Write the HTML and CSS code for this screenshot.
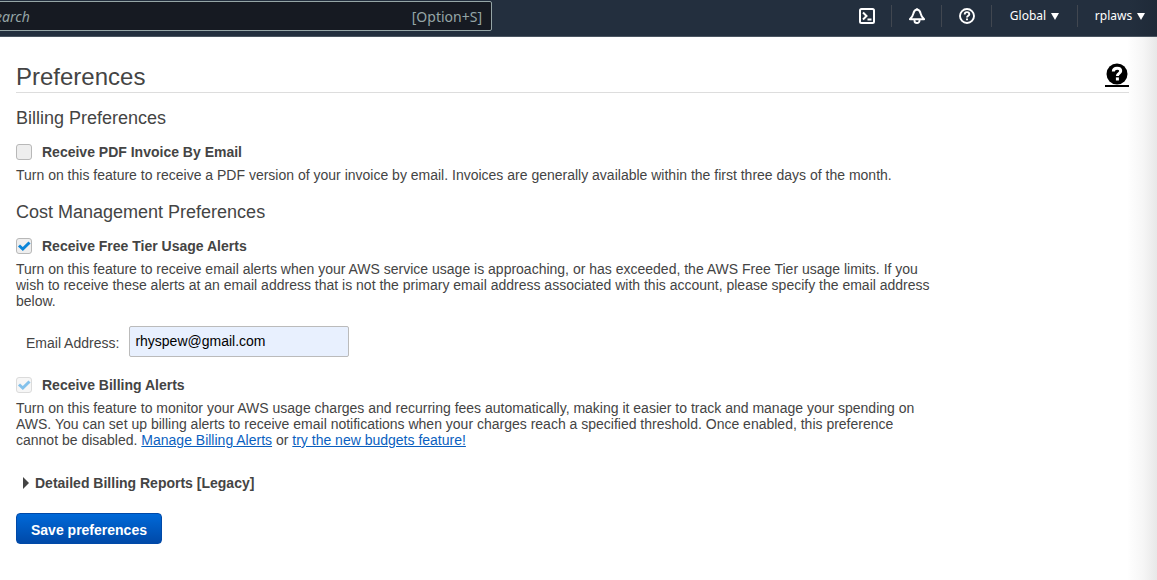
FILE: index.html
```html
<!DOCTYPE html>
<html lang="en">
<head>
<meta charset="utf-8">
<title>Preferences</title>
<link rel="stylesheet" href="styles.css">
</head>
<body>
<header class="topbar">
  <div class="search">
    <input class="search-input" type="search" placeholder="Search" aria-label="Search">
    <span class="search-hint">[Option+S]</span>
  </div>
  <nav class="tools">
    <button class="tool" type="button" aria-label="CloudShell">
      <svg width="16" height="16" viewBox="0 0 16 16" fill="none" stroke="#fff" stroke-width="2"><rect x="1" y="1" width="14" height="14" rx="1.5"/><path d="M4 4.5 7.5 8 4 11.500M8.500 11.500h4"/></svg>
    </button>
    <button class="tool" type="button" aria-label="Notifications">
      <svg width="16" height="16" viewBox="0 0 16 16" fill="none" stroke="#fff" stroke-width="1.900" stroke-linejoin="round"><path d="M8 1.500C6 1.900 4.800 3.300 4.300 5.800 3.800 8.300 2.500 9.800.8 11.200h14.400C13.500 9.800 12.200 8.300 11.700 5.800 11.200 3.300 10 1.900 8 1.500zM5.500 11.500v1.200a2.500 2.300 0 0 0 5 0v-1.200M8 .3v1.500"/></svg>
    </button>
    <button class="tool" type="button" aria-label="Support">
      <svg width="16" height="16" viewBox="0 0 16 16" fill="none" stroke="#fff" stroke-width="1.900"><circle cx="8" cy="8" r="7"/><path d="M5.700 6.400C5.700 4.900 6.700 4.100 8 4.100s2.300.8 2.300 2.100c0 1.500-2.300 1.600-2.300 3.300M8 10.600v1.700"/></svg>
    </button>
    <button class="tool menu region" type="button">Global <svg width="8" height="7" viewBox="0 0 8 7"><path d="M0 0h8L4 7z" fill="#fff"/></svg></button>
    <button class="tool menu account" type="button">rplaws <svg width="8" height="7" viewBox="0 0 8 7"><path d="M0 0h8L4 7z" fill="#fff"/></svg></button>
  </nav>
</header>
<main class="page">
  <div class="title-row">
    <h1 class="title">Preferences</h1>
    <a class="help" href="#" aria-label="Help">
      <svg width="22" height="22" viewBox="0 0 22 22"><circle cx="11" cy="11" r="10.500" fill="#000"/><path d="M7.300 8.500C7.400 6.400 9 5.300 11.100 5.300c2.100 0 3.600 1 3.600 2.800 0 2.400-3.300 2.200-3.300 4.900" fill="none" stroke="#fff" stroke-width="3"/><path d="M9.900 14.400h3v3.100h-3z" fill="#fff"/></svg>
    </a>
  </div>

  <h2 class="section first">Billing Preferences</h2>
  <label class="option"><input class="check" type="checkbox">Receive PDF Invoice By Email</label>
  <p class="text">Turn on this feature to receive a PDF version of your invoice by email. Invoices are generally available within the first three days of the month.</p>

  <h2 class="section">Cost Management Preferences</h2>
  <label class="option"><input class="check" type="checkbox" checked>Receive Free Tier Usage Alerts</label>
  <p class="text">Turn on this feature to receive email alerts when your AWS service usage is approaching, or has exceeded, the AWS Free Tier usage limits. If you wish to receive these alerts at an email address that is not the primary email address associated with this account, please specify the email address below.</p>
  <div class="field">
    <label for="email">Email Address:</label>
    <input class="email" id="email" type="email" value="rhyspew@gmail.com">
  </div>
  <label class="option billing"><input class="check" type="checkbox" checked disabled>Receive Billing Alerts</label>
  <p class="text">Turn on this feature to monitor your AWS usage charges and recurring fees automatically, making it easier to track and manage your spending on AWS. You can set up billing alerts to receive email notifications when your charges reach a specified threshold. Once enabled, this preference cannot be disabled. <a href="#">Manage Billing Alerts</a> or <a href="#">try the new budgets feature!</a></p>

  <details class="reports"><summary><svg width="6" height="12" viewBox="0 0 6 12"><path d="M0 0v12l6-6z" fill="#444"/></svg>Detailed Billing Reports [Legacy]</summary></details>
  <button class="save" type="button">Save preferences</button>
</main>
</body>
</html>
```
FILE: styles.css
```css
* { box-sizing: border-box; }

body {
  margin: 0;
  min-height: 100vh;
  overflow-x: hidden;
  display: flex;
  flex-direction: column;
  color: #444;
  background: #fff;
  font: 14px/16px "Liberation Sans", Arial, sans-serif;
}

.topbar {
  display: flex;
  align-items: flex-start;
  justify-content: space-between;
  height: 37px;
  background: linear-gradient(to left, #1f2a38, #232f3e 28px);
  border-bottom: 1px solid #4a5561;
  font-family: "Noto Sans", sans-serif;
}

.search {
  display: flex;
  align-items: center;
  width: 520px;
  height: 30px;
  margin: 1px 0 0 -28px;
  padding: 2px 9px 0 15px;
  background: #161a22;
  border: 1px solid #95a5a6;
  border-radius: 2px;
  color: #95a5a6;
}

.search-input {
  flex: 1;
  min-width: 0;
  height: 20px;
  padding: 0;
  border: 0;
  outline: 0;
  background: none;
  color: #fff;
  font: italic 14px/20px "Noto Sans", sans-serif;
}

.search-input::placeholder { color: #95a5a6; opacity: 1; }

.search-hint { font-size: 14px; line-height: 20px; }

.tools { display: flex; padding-top: 5px; }

.tool {
  display: flex;
  align-items: center;
  justify-content: center;
  width: 50px;
  height: 22px;
  padding: 0;
  border: 0;
  border-left: 1px solid #414750;
  background: none;
  color: #fff;
  font: 12px/16px "Noto Sans", sans-serif;
}

.tool:first-child { border-left-color: transparent; }

.menu { gap: 5px; }
.region { width: 86px; }
.account { width: 80px; padding-left: 5px; }

.page {
  flex: 1;
  padding: 24px 28px 36px 16px;
  background: linear-gradient(to left, #e8e8e8, #f6f6f6 14px, #fff 30px);
}

.title-row {
  display: flex;
  align-items: flex-start;
  justify-content: space-between;
  height: 32px;
  border-bottom: 1px solid #ddd;
}

.title { margin: 0; font-size: 24px; line-height: 32px; font-weight: 400; }

.help {
  display: flex;
  justify-content: center;
  width: 24px;
  margin-top: 2px;
  border-bottom: 2px solid #000;
}

.section { margin: 17px 0 0; font-size: 18px; line-height: 24px; font-weight: 400; }
.first { margin-top: 13px; }

.option {
  display: flex;
  align-items: center;
  gap: 10px;
  width: fit-content;
  margin-top: 14px;
  font-weight: 700;
}

.billing { margin-top: 20px; }

.check {
  appearance: none;
  width: 16px;
  height: 16px;
  margin: 0;
  border: 1px solid #b8b8b8;
  border-radius: 3px;
  background: #eee;
}

.check:checked {
  background: url("data:image/svg+xml,%3Csvg xmlns='http://www.w3.org/2000/svg' viewBox='0 0 14 14'%3E%3Cpath d='M2 6.500l3.800 3.500 6.700-6.500' fill='none' stroke='%230a84d8' stroke-width='3'/%3E%3C/svg%3E") #eee;
}

.check:disabled { opacity: 0.5; }

.text { max-width: 918px; margin: 7px 0 0; }
.text a { color: #0a5fbf; }

.field {
  display: flex;
  align-items: center;
  gap: 10px;
  margin: 17px 0 0 10px;
}

.field label { padding-top: 3px; }

.email {
  width: 220px;
  height: 31px;
  padding: 0 5px 2px;
  border: 1px solid #bbb;
  border-radius: 2px;
  background: #e8f0fe;
  color: #000;
  font: 14px/16px "Liberation Sans", Arial, sans-serif;
}

.reports { margin-top: 27px; }

.reports summary {
  display: flex;
  align-items: center;
  gap: 6px;
  padding-left: 7px;
  font-weight: 700;
  list-style: none;
}

.save {
  display: block;
  height: 31px;
  margin-top: 22px;
  padding: 2px 14px 0;
  border: 1px solid #0049a8;
  border-radius: 4px;
  background: linear-gradient(#0069d8, #0049a8);
  color: #fff;
  font: 700 14px/16px "Liberation Sans", Arial, sans-serif;
}
```
